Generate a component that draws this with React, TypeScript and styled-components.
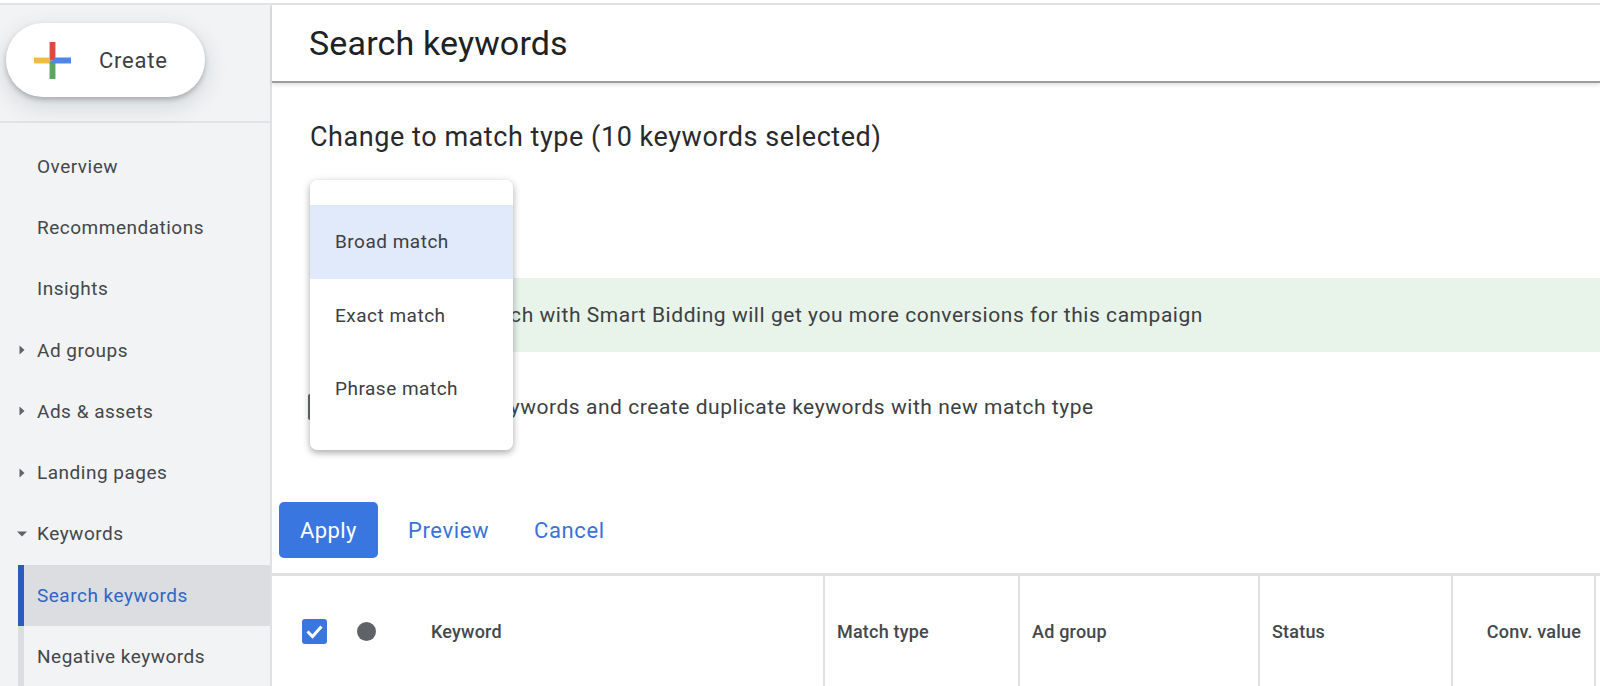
import React from "react";
import styled, { createGlobalStyle } from "styled-components";

const Global = createGlobalStyle`
  html, body { margin: 0; padding: 0; background: #fff; }
  body { font-family: Roboto, "Liberation Sans", sans-serif; color: #3c4043; -webkit-font-smoothing: antialiased; }
`;

const Page = styled.div`
  width: 1600px; height: 686px; overflow: hidden; display: flex; flex-direction: column; background: #fff;
`;
const TopRule = styled.div`
  height: 5px; flex: none; box-sizing: border-box; border-bottom: 2px solid #e2e3e5; background: #fff;
`;
const Body = styled.div`
  flex: 1; display: flex; min-height: 0;
`;
const Sidebar = styled.nav`
  width: 270px; flex: none; background: #f1f3f5; display: flex; flex-direction: column;
`;
const CreateArea = styled.div`
  height: 118px; flex: none; box-sizing: border-box; padding: 18px 0 0 6px; border-bottom: 2px solid #e2e3e6;
`;
const CreateButton = styled.div`
  width: 199px; height: 74px; border-radius: 37px; background: #fff; display: flex; align-items: center;
  box-shadow: 0 3px 5px rgba(60,64,67,.3), 0 8px 20px 4px rgba(60,64,67,.12);
`;
const PlusIcon = styled.svg`
  width: 37px; height: 37px; margin-left: 28px; flex: none;
`;
const CreateLabel = styled.span`
  margin-left: 28px; font-size: 22px; letter-spacing: .75px; color: #3c4043;
`;
const NavList = styled.div`
  display: flex; flex-direction: column; padding-top: 12.5px;
`;
const NavRow = styled.div<{ $selected?: boolean; $sub?: boolean }>`
  height: 61.3px; flex: none; display: flex; align-items: center; box-sizing: border-box; position: relative;
  font-size: 19px; letter-spacing: .5px; padding-left: 37px;
  color: ${(p) => (p.$selected ? "#2f66c4" : "#44474a")};
  background: ${(p) => (p.$selected ? "#dcdde0" : "transparent")};
  ${(p) => p.$sub && `margin-left: 18px; padding-left: 13px; border-left: 6px solid ${p.$selected ? "#2a5cbd" : "#dcdde0"};`}
`;
const Caret = styled.svg`
  position: absolute; left: 15px; top: 50%; margin-top: -7px; width: 14px; height: 14px; fill: #5f6368;
`;
const Main = styled.main`
  flex: 1; min-width: 0; display: flex; flex-direction: column; position: relative;
  border-left: 2px solid #e0e1e5;
`;
const TitleBar = styled.header`
  height: 78px; flex: none; box-sizing: border-box; padding: 0 0 0 37px; display: flex; align-items: center;
  border-bottom: 2px solid #9c9d9f; box-shadow: 0 2px 4px rgba(0,0,0,.12);
`;
const Title = styled.h1`
  margin: 0; font-weight: 400; font-size: 34px; letter-spacing: .15px; color: #202124;
`;
const Panel = styled.section`
  height: 493px; flex: none; box-sizing: border-box; display: flex; flex-direction: column; padding-top: 37px;
  border-bottom: 3px solid #e0e1e5;
`;
const Heading = styled.h2`
  margin: 0 0 0 38px; font-weight: 400; font-size: 27px; line-height: 34px; letter-spacing: .55px; color: #28292c;
`;
const Banner = styled.div`
  margin: 124px 0 0 38px; height: 74px; flex: none; background: #e8f3ea; display: flex; align-items: center;
  padding-left: 38px; font-size: 21px; letter-spacing: .54px; color: #3c4043;
`;
const CheckRow = styled.div`
  margin-top: 37px; margin-left: 36px; display: flex; align-items: center; gap: 19px; height: 36px;
  font-size: 21px; letter-spacing: .54px; color: #3c4043;
`;
const EmptyBox = styled.span`
  width: 26px; height: 26px; box-sizing: border-box; border: 2px solid #5f6368; border-radius: 2px; flex: none;
`;
const Actions = styled.div`
  margin-top: 77px; margin-left: 7px; display: flex; align-items: center;
`;
const ApplyButton = styled.div`
  width: 99px; height: 56px; border-radius: 5px; background: #3a76e0; color: #fff; display: flex;
  align-items: center; justify-content: center; font-size: 22px; letter-spacing: .4px;
`;
const LinkButton = styled.div<{ $gap: number }>`
  margin-left: ${(p) => p.$gap}px; color: #3a72d8; font-size: 22px; letter-spacing: .6px;
`;
const Menu = styled.div`
  position: absolute; left: 38px; top: 175px; width: 203px; height: 270px; box-sizing: border-box; padding: 25px 0;
  background: #fff; border-radius: 7px; display: flex; flex-direction: column;
  box-shadow: 0 3px 6px rgba(60,64,67,.35), 0 1px 10px rgba(60,64,67,.12);
`;
const MenuItem = styled.div<{ $active?: boolean }>`
  height: 73.5px; flex: none; display: flex; align-items: center; padding-left: 25px; font-size: 19px; letter-spacing: .5px;
  color: #3c4043; background: ${(p) => (p.$active ? "#e1eafb" : "transparent")};
`;
const TableHead = styled.div`
  flex: 1; display: grid; grid-template-columns: 553px 195px 240px 193px 143px 1fr;
`;
const Cell = styled.div<{ $right?: boolean }>`
  box-sizing: border-box; display: flex; align-items: center; border-right: 2px solid #e0e1e5; padding: 0 13px 0 12px;
  font-size: 18px; font-weight: 500; letter-spacing: .2px; color: #45484b;
  justify-content: ${(p) => (p.$right ? "flex-end" : "flex-start")};
  &:last-child { border-right: 0; }
`;
const SelectCell = styled(Cell)`
  padding-left: 30px;
`;
const CheckedBox = styled.svg`
  width: 25px; height: 25px; flex: none;
`;
const Dot = styled.span`
  width: 19px; height: 19px; border-radius: 50%; background: #5f6368; margin-left: 30px; flex: none;
`;
const KeywordLabel = styled.span`
  margin-left: 55px;
`;

const navTop: { label: string; caret?: "right" | "down" }[] = [
  { label: "Overview" },
  { label: "Recommendations" },
  { label: "Insights" },
  { label: "Ad groups", caret: "right" },
  { label: "Ads & assets", caret: "right" },
  { label: "Landing pages", caret: "right" },
  { label: "Keywords", caret: "down" },
];

export default function App() {
  return (
    <Page>
      <Global />
      <TopRule />
      <Body>
        <Sidebar>
          <CreateArea>
            <CreateButton>
              <PlusIcon viewBox="0 0 38 38">
                <rect x="16" y="0" width="6" height="19" fill="#db4c3f" />
                <rect x="0" y="16" width="16" height="6" fill="#f4b942" />
                <rect x="16" y="19" width="6" height="19" fill="#5aa75d" />
                <path d="M22 16h16v6H16z" fill="#4f86ec" />
              </PlusIcon>
              <CreateLabel>Create</CreateLabel>
            </CreateButton>
          </CreateArea>
          <NavList>
            {navTop.map((n) => (
              <NavRow key={n.label}>
                {n.caret === "right" && (
                  <Caret viewBox="0 0 14 14"><path d="M4.500 2.500 9.500 7l-5 4.500z" /></Caret>
                )}
                {n.caret === "down" && (
                  <Caret viewBox="0 0 14 14"><path d="M2 4.500h10L7 9.500z" /></Caret>
                )}
                {n.label}
              </NavRow>
            ))}
            <NavRow $sub $selected>Search keywords</NavRow>
            <NavRow $sub>Negative keywords</NavRow>
          </NavList>
        </Sidebar>
        <Main>
          <TitleBar>
            <Title>Search keywords</Title>
          </TitleBar>
          <Panel>
            <Heading>Change to match type (10 keywords selected)</Heading>
            <Banner>Using broad match with Smart Bidding will get you more conversions for this campaign</Banner>
            <CheckRow>
              <EmptyBox />
              Keep original keywords and create duplicate keywords with new match type
            </CheckRow>
            <Actions>
              <ApplyButton>Apply</ApplyButton>
              <LinkButton $gap={30}>Preview</LinkButton>
              <LinkButton $gap={45}>Cancel</LinkButton>
            </Actions>
          </Panel>
          <TableHead>
            <SelectCell>
              <CheckedBox viewBox="0 0 25 25">
                <rect width="25" height="25" rx="3" fill="#3a76e0" />
                <path d="M5.500 12.500l5 5 9-10" fill="none" stroke="#fff" strokeWidth="3" />
              </CheckedBox>
              <Dot />
              <KeywordLabel>Keyword</KeywordLabel>
            </SelectCell>
            <Cell>Match type</Cell>
            <Cell>Ad group</Cell>
            <Cell>Status</Cell>
            <Cell $right>Conv. value</Cell>
            <Cell />
          </TableHead>
          <Menu>
            <MenuItem $active>Broad match</MenuItem>
            <MenuItem>Exact match</MenuItem>
            <MenuItem>Phrase match</MenuItem>
          </Menu>
        </Main>
      </Body>
    </Page>
  );
}
